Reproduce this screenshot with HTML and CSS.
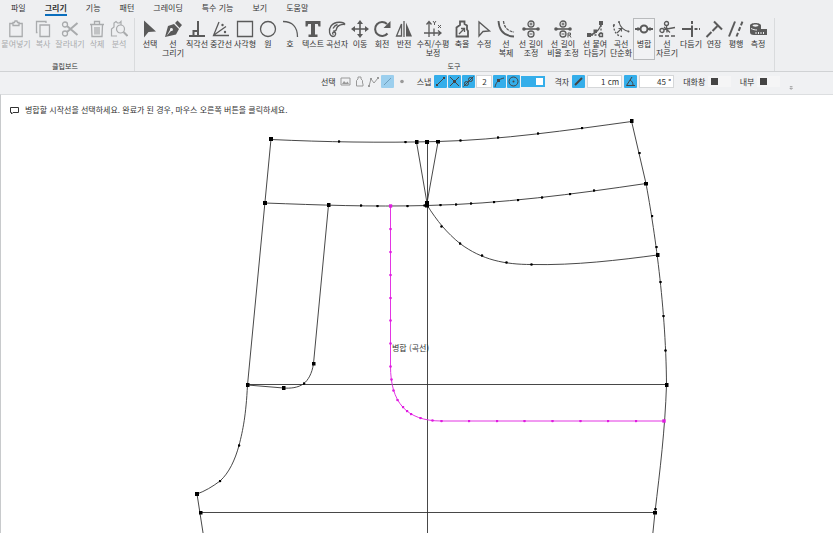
FILE: index.html
```html
<!DOCTYPE html>
<html lang="ko">
<head>
    <meta charset="UTF-8">
    <meta name="viewport" content="width=device-width, initial-scale=1.0">
    <title>패턴 그리기</title>
    <link rel="stylesheet" href="styles.css">
</head>
<body>
    <nav class="menu">
        <a href="#">파일</a>
        <a href="#" class="active">그리기</a>
        <a href="#">기능</a>
        <a href="#">패턴</a>
        <a href="#">그레이딩</a>
        <a href="#">특수 기능</a>
        <a href="#">보기</a>
        <a href="#">도움말</a>
    </nav>

    <div class="ribbon">
        <section class="group clipboard">
            <div class="tools">
                <button class="tool w4" disabled>
                    <svg viewBox="0 0 18 18"><path d="M6 3.500H2.800v13h12.400v-13H12"/><path d="M6 5.500v-3h1.500l.5-1.500h2l.5 1.500H12v3z"/></svg>
                    붙여넣기
                </button>
                <button class="tool" disabled>
                    <svg viewBox="0 0 18 18"><path d="M6 5h9.500v11.500H6z"/><path d="M3.500 12.500H2.500v-11H12V3"/></svg>
                    복사
                </button>
                <button class="tool w4" disabled>
                    <svg viewBox="0 0 18 18"><circle cx="4" cy="4.500" r="2.500"/><circle cx="4" cy="13.500" r="2.500"/><path d="M6 6l10.500 9M6 12L16.500 3" stroke-width="2"/></svg>
                    잘라내기
                </button>
                <button class="tool" disabled>
                    <svg viewBox="0 0 18 18"><path d="M2 4.500h14M6.500 4V1.500h5V4M3.500 5l.5 11.500h10L14.500 5M7 7v7.500M9 7v7.500M11 7v7.500"/></svg>
                    삭제
                </button>
                <button class="tool" disabled>
                    <svg viewBox="0 0 18 18"><path d="M7 16H1.500V9L4 7V3l2-1.500 1.500 1.500h2L11 1.500V5" stroke-width="1.200"/><circle cx="10.500" cy="9" r="4" stroke-width="1.200"/><path d="M13.500 12l4 4" stroke-width="2"/></svg>
                    분석
                </button>
            </div>
            <h2>클립보드</h2>
        </section>

        <section class="group drawing">
            <div class="tools">
                <button class="tool">
                    <svg viewBox="0 0 18 18"><path class="fill" d="M3 .5v17l4.500-5.500L15 11.500z"/></svg>
                    선택
                </button>
                <button class="tool w3">
                    <svg viewBox="0 0 18 18"><path class="fill" fill-rule="evenodd" d="M1 17L4 6l6-2 5 5-3 5.500zM2.500 16l4.500-5a1.500 1.500 0 1 0-1-1zM11 3l2.500-2.500L18 5l-2.500 3z"/></svg>
                    선<br>그리기
                </button>
                <button class="tool w3">
                    <svg viewBox="0 0 18 18"><path d="M1 16h16M10 1v15M5.500 16v-5H10" stroke-width="2"/></svg>
                    직각선
                </button>
                <button class="tool w3">
                    <svg viewBox="0 0 18 18"><path d="M7 2L1.500 15.500H17M2 15l12-8.500"/><circle class="fill" cx="10.500" cy="5" r="1.200"/><circle class="fill" cx="13" cy="12" r="1.200"/></svg>
                    중간선
                </button>
                <button class="tool w3">
                    <svg viewBox="0 0 18 18"><path d="M1.500 1.500h15v15h-15z"/></svg>
                    사각형
                </button>
                <button class="tool">
                    <svg viewBox="0 0 18 18"><circle cx="9" cy="9" r="7.500"/></svg>
                    원
                </button>
                <button class="tool">
                    <svg viewBox="0 0 18 18"><path d="M2 1.500C11 1.500 16.500 7 16.500 17"/></svg>
                    호
                </button>
                <button class="tool w3">
                    <svg viewBox="0 0 18 18"><path class="fill" d="M1.500 1h15v5.500h-2l-.7-2.500H11v10.500h2.500v2.500h-9v-2.500H7V4H4.200l-.7 2.500h-2z"/></svg>
                    텍스트
                </button>
                <button class="tool w3">
                    <svg viewBox="0 0 18 18"><path d="M17 4.500C16 1.500 7 1 3 6c-3 4-1.500 10 2 10.500 3 0 3.500-4 1-4.500-1.500 0-2 2-.5 2.500M17 4.500C14 4 9 5 8.500 9c-.5 2-2 2.500-3 1.500M5 8.500c1-2 2.500-3.500 4.500-4"/></svg>
                    곡선자
                </button>
                <button class="tool">
                    <svg viewBox="0 0 18 18"><path d="M9 2v14M2 9h14" stroke-width="1.600"/><path class="fill" d="M9 0l3 4H6zM9 18l3-4H6zM0 9l4-3v6zM18 9l-4-3v6z"/></svg>
                    이동
                </button>
                <button class="tool">
                    <svg viewBox="0 0 18 18"><path d="M14.500 13.500A7 7 0 1 1 14 4" stroke-width="2"/><path class="fill" d="M17.500 1v7h-7z"/></svg>
                    회전
                </button>
                <button class="tool">
                    <svg viewBox="0 0 18 18"><path d="M9 1v16M6.500 4v12H1.500z"/><path class="fill" d="M11 2.500l6 14h-6z"/></svg>
                    반전
                </button>
                <button class="tool w5">
                    <svg viewBox="0 0 18 18"><path d="M5 17V2M2.500 4.500L5 1.500l2.500 3M0 13h16M14 10.500l3 2.500-3 2.500M10 8.500V16"/><path d="M9 1l1.500 2L12 1M10.500 3v2M14 5l3 3M17 5l-3 3" stroke-width="1"/></svg>
                    수직/수평<br>보정
                </button>
                <button class="tool">
                    <svg viewBox="0 0 18 18"><path d="M3.500 16.500V7.500L7 5V1.500h4.500V4L14 5.500v4l1 1.500v5.500z" stroke-width="1.800"/><path d="M6 14l5-5M8 8.500h3.500V12"/></svg>
                    축율
                </button>
                <button class="tool">
                    <svg viewBox="0 0 18 18"><path d="M4 2v14l4-4.500 6.500-.5z"/></svg>
                    수정
                </button>
                <button class="tool">
                    <svg viewBox="0 0 18 18"><path d="M1.500 1C2 10 7 16 17 16.500" stroke-width="1.800"/><path d="M6.500 1C7 7 11 11.500 17 12" stroke-dasharray="3 1"/></svg>
                    선<br>복제
                </button>
                <button class="tool w3s">
                    <svg viewBox="0 0 18 18"><path d="M1 9h16" stroke-width="1.600"/><circle cx="9" cy="4" r="3"/><circle cx="9" cy="14" r="3"/><path d="M7.500 4h3M9 2.500v3M7.500 14h3" stroke-width="1"/><circle class="fill" cx="2" cy="9" r="1.800"/><circle class="fill" cx="16" cy="9" r="1.800"/></svg>
                    선 길이<br>조정
                </button>
                <button class="tool w5">
                    <svg viewBox="0 0 18 18"><path d="M1 9h16" stroke-width="1.600"/><circle cx="9" cy="4" r="3"/><circle cx="9" cy="14" r="3"/><path d="M7.500 4h3M9 2.500v3M7.500 14h3" stroke-width="1"/><circle class="fill" cx="2" cy="9" r="1.800"/><circle class="fill" cx="16" cy="9" r="1.800"/><path d="M14 17.500V13h2.500v2H14M15.500 15l1.500 2.500" stroke-width="1"/></svg>
                    선 길이<br>비율 조정
                </button>
                <button class="tool w3s">
                    <svg viewBox="0 0 18 18"><path d="M3 15c5 0 12-6 12-12"/><path d="M15 5v10M5 15h9" stroke-dasharray="2 1.500"/><path class="fill" d="M1 13h4v4H1zM13 1h4v4h-4zM7.500 9.500h3.500V13H7.500z"/><path d="M13.500 13.500h3v3h-3z"/></svg>
                    선 붙여<br>다듬기
                </button>
                <button class="tool w3">
                    <svg viewBox="0 0 18 18"><path d="M1.500 5C2 12 5 16 10 16.500" stroke-dasharray="2 1.500"/><path d="M7 2c1 5 5 9 10 9.500M5 13l4.500-4.500M6.500 8.500h3v3" stroke-width="1.100"/><circle class="fill" cx="7" cy="2" r="1"/><circle class="fill" cx="16.500" cy="11.500" r="1"/><circle class="fill" cx="2" cy="5" r="1"/></svg>
                    곡선<br>단순화
                </button>
                <button class="tool selected">
                    <svg viewBox="0 0 18 18"><path d="M0 9h5M13 9h5" stroke-width="2"/><circle cx="9" cy="9" r="3.500" stroke-width="2"/><path class="fill" d="M2 7.500h2v3H2zM14 7.500h2v3h-2z"/></svg>
                    병합
                </button>
                <button class="tool w3">
                    <svg viewBox="0 0 18 18"><circle cx="8.500" cy="3.500" r="2"/><circle cx="4" cy="10.500" r="2"/><path d="M8.500 5.500l.5 7M6 9.500l11-2M6 7l6 5.500"/><path d="M1 16h16" stroke-dasharray="4 2"/></svg>
                    선<br>자르기
                </button>
                <button class="tool w3">
                    <svg viewBox="0 0 18 18"><path d="M0 9h11M10 9v8" stroke-width="2"/><path d="M10 1v7M12.500 9H18" stroke-dasharray="3 1.500" stroke-width="2"/></svg>
                    다듬기
                </button>
                <button class="tool">
                    <svg viewBox="0 0 18 18"><path d="M9 1.500l8 8" stroke-width="2"/><path d="M1.500 17l5-5M7.500 11L13 5.500" stroke-dasharray="7 1.500 3 1.500" stroke-width="2"/></svg>
                    연장
                </button>
                <button class="tool">
                    <svg viewBox="0 0 18 18"><path d="M2 16.500l6-15" stroke-width="2"/><path d="M9.500 16.500l6-15" stroke-dasharray="4 2" stroke-width="2"/></svg>
                    평행
                </button>
                <button class="tool">
                    <svg viewBox="0 0 18 18"><path class="fill" fill-rule="evenodd" d="M1 5.500c0-3.500 11-3.500 11 0v3.500h6v6H5c-3 0-4-1-4-3zM3.500 5.500c0 1.500 6 1.500 6 0s-6-1.500-6 0z"/><path class="ticks" d="M2 8.500c2 1 4 1.500 6 1.500M7 14v-2M9.500 14v-2M12 14v-2M14.500 14v-2"/></svg>
                    측정
                </button>
            </div>
            <h2>도구</h2>
        </section>
    </div>

    <div class="options">
        <span class="caption">선택</span>
        <div class="set">
            <button class="mini off" aria-label="이미지"><svg viewBox="0 0 13 13"><path d="M2 3h9v7H2z"/><path class="fill" d="M3 9l2-3 2 2 1.500-1.500L10 9z"/></svg></button>
            <button class="mini off" aria-label="패턴 조각"><svg viewBox="0 0 13 13"><path d="M3.500 11V5.500L5 4V2h3v2l1.500 1.500V8l.5 1v2z"/></svg></button>
            <button class="mini off" aria-label="꺾은선"><svg viewBox="0 0 13 13"><path d="M2 11l2-7 3 4 4-5"/><path class="fill" d="M1 10h2v2H1zM3 3h2v2H3zM10 2h2v2h-2z"/></svg></button>
            <button class="mini on faded" aria-label="선"><svg viewBox="0 0 13 13"><path d="M3 10l7-7"/></svg></button>
            <button class="mini off" aria-label="점"><svg viewBox="0 0 13 13"><circle class="fill" cx="7" cy="6.500" r="1.800"/></svg></button>
        </div>

        <label class="caption" for="snap-count">스냅</label>
        <div class="set">
            <button class="mini on" aria-label="끝점"><svg viewBox="0 0 13 13"><path d="M3 10l7-7"/><path class="fill" d="M2 9h2v2H2zM9 2h2v2H9z"/></svg></button>
            <button class="mini on" aria-label="교차점"><svg viewBox="0 0 13 13"><path d="M2 2l9 9M11 2l-9 9"/><path class="fill" d="M5 5h3v3H5z"/></svg></button>
            <button class="mini on" aria-label="분할점"><svg viewBox="0 0 13 13"><path d="M1.500 11.500l10-10"/><circle cx="4.500" cy="8.500" r="2"/><circle cx="8.500" cy="4.500" r="2"/></svg></button>
            <input class="field count" id="snap-count" type="text" value="2">
            <button class="mini on" aria-label="곡선"><svg viewBox="0 0 13 13"><path d="M2 12C3 7 6 4 11 3"/><path class="fill" d="M4 4h3v3H4z"/></svg></button>
            <button class="mini on" aria-label="중심점"><svg viewBox="0 0 13 13"><circle cx="6.500" cy="6.500" r="4.500"/><circle class="fill" cx="6.500" cy="6.500" r="1"/></svg></button>
            <input class="switch" type="checkbox" aria-label="스냅 사용" checked>
        </div>

        <label class="caption" for="grid-size">격자</label>
        <div class="set wide">
            <button class="mini on" aria-label="격자 간격"><svg viewBox="0 0 13 13"><path d="M3 10l7-7" stroke-width="2"/></svg></button>
            <input class="field" id="grid-size" type="text" value="1 cm">
            <button class="mini on" aria-label="격자 각도"><svg viewBox="0 0 13 13"><path d="M8 2L2.500 10.500H11M6 5c2 1 3 3 3 5"/></svg></button>
            <input class="field" type="text" value="45 °" aria-label="각도">
        </div>

        <span class="caption">대화창</span>
        <button class="swatch" aria-label="대화창 색상"></button>
        <span class="caption">내부</span>
        <button class="swatch" aria-label="내부 색상"></button>
        <button class="overflow" aria-label="더 보기"><svg viewBox="0 0 5 5"><path d="M1 .5h3M1 2.500h3L2.500 4z"/></svg></button>
    </div>

    <main class="canvas">
        <svg class="pattern" viewBox="1 95 832 438" preserveAspectRatio="xMinYMin slice">
            <defs>
                <marker id="node" markerUnits="userSpaceOnUse" markerWidth="4" markerHeight="4" refX="2" refY="2"><rect width="4" height="4"/></marker>
                <marker id="point" markerUnits="userSpaceOnUse" markerWidth="3" markerHeight="3" refX="1.300" refY="1.300"><circle cx="1.300" cy="1.300" r="1.300"/></marker>
                <marker id="node-hot" markerUnits="userSpaceOnUse" markerWidth="4" markerHeight="4" refX="1.700" refY="1.700"><rect class="hot" width="3.400" height="3.400"/></marker>
                <marker id="point-hot" markerUnits="userSpaceOnUse" markerWidth="3" markerHeight="3" refX="1.300" refY="1.300"><circle class="hot" cx="1.300" cy="1.300" r="1.300"/></marker>
            </defs>

            <!-- guide lines -->
            <path class="line" d="M247.500 384.500H666.500M200.500 512.500H655M427.500 142V700"/>

            <!-- waistband and dart -->
            <path class="line" d="M271 139.500C325 142 380 143 438 141.500C500 140 570 130 631.500 121.500"/>
            <path class="line" d="M265 203C320 205 370 207 427 205.500C500 204 575 194 646 183.500"/>
            <path class="line" d="M416.500 142L427 203L438 142"/>

            <!-- side seams -->
            <path class="line" d="M631.500 121L646 183.500C652 216 666 300 666.500 385C665 430 660 470 655 512L636 700"/>
            <path class="line" d="M271 139L247.500 385C246 415 243 430 239 445.500C235 460 229 473 220 481C212 487 205 491 197 494L229 700"/>

            <!-- pocket and fly -->
            <path class="line" d="M427 205C437 221 447 233 460 243.500C482 260 505 264.500 531.500 264.500C575 265.500 620 260 657.500 255"/>
            <path class="line" d="M328.500 205L313.500 363.500C312 374 308 380 304 383.500C298 388 290 388.500 283.500 388L247.500 385"/>

            <polyline class="nodes" points="271,139 416.500,142 427,142 438,141.500 631.500,121 265,203 328.500,205 427,203 427,205.500 646,183.500 657.500,255 666.500,385 655,512.500 200.500,512.500 197,494 247.500,385 283.500,388 313.500,363.500"/>
            <polyline class="points" points="339,141.500 405.500,142 460.500,140.500 498,137.500 538,133.500 582,128 361,205.500 377.500,206 407.500,206 424.500,205.500 440.500,205 456,204.500 471,203.500 494,202 518,200 542,197.500 570,194 594,190.500 441.500,226.500 460,243.500 482,255.500 506.500,262.500 531.500,264.500 639.500,153 652,216 656.500,247 660.500,282 663.500,316 665.500,350.500 655.500,509 304,383.500 239,445.500 220,481"/>

            <!-- lines being merged -->
            <path class="line merge" d="M390.500 206V366C390.500 402 406 421 441.500 421H664"/>
            <polyline class="points merge" points="390.500,229 390.500,252 390.500,275 390.500,298 390.500,320.500 390.500,343.500 390.500,366.500 391.500,379.500 393.500,390.500 397.500,400 403,407 407,411 411,414 420.500,418 432.500,420.500 441.500,421 469,421 497,421 524.500,421 552.500,421 580.500,421 608,421 636,421"/>
            <polyline class="nodes merge" points="390.500,206 664,421"/>
            <text class="hint" x="392" y="351">병합 (곡선)</text>
        </svg>
        <p class="message">
            <svg viewBox="0 0 9 9"><path d="M.5 1.500h8v5H3L1.500 8V6.500h-1z"/></svg>
            병합할 시작선을 선택하세요. 완료가 된 경우, 마우스 오른쪽 버튼을 클릭하세요.
        </p>
    </main>
</body>
</html>
```
FILE: styles.css
```css
* {
    margin: 0;
    padding: 0;
    box-sizing: border-box;
}

body {
    font-family: "Noto Sans CJK KR", sans-serif;
    font-size: 8px;
    color: #333;
    background: #eeeff1;
    height: 100vh;
    display: flex;
    flex-direction: column;
    overflow: hidden;
}

button,
input {
    font: inherit;
    color: inherit;
    border: none;
    background: none;
}

svg {
    display: block;
    fill: none;
    stroke: currentColor;
}

.fill {
    fill: currentColor;
    stroke: none;
}

.menu {
    display: flex;
    gap: 19px;
    padding: 0 11px;
    height: 18px;
}

.menu a {
    height: 16px;
    line-height: 16px;
    color: #333;
    text-decoration: none;
    white-space: nowrap;
}

.menu .active {
    font-weight: bold;
    border-bottom: 2px solid #0a6ebd;
}

.ribbon {
    display: flex;
    height: 54px;
    border-bottom: 1px solid #d0d2d4;
}

.group {
    display: flex;
    flex-direction: column;
    justify-content: space-between;
    border-right: 1px solid #d9dbdd;
}

.clipboard {
    padding-right: 4px;
}

.drawing {
    padding: 0 5px 0 4px;
}

.group h2 {
    font-size: 7px;
    font-weight: normal;
    line-height: 10px;
    text-align: center;
}

.tools {
    display: flex;
}

.tool {
    display: flex;
    flex-direction: column;
    align-items: center;
    flex: none;
    width: 22px;
    height: 42px;
    border: 1px solid transparent;
    line-height: 9px;
    text-align: center;
    white-space: nowrap;
    color: #333;
}

.tool svg {
    width: 18px;
    height: 18px;
    margin: 1px 0;
    flex: none;
    color: #5a5a5a;
    stroke-width: 1.3;
}

.tool:disabled,
.tool:disabled svg {
    color: #a9abad;
}

.tool.selected {
    border-color: #b9bbbd;
    background: #f1f2f4;
}

.tool .ticks {
    stroke: #eeeff1;
    stroke-width: 1;
}

.w3 {
    width: 24px;
}

.w3s {
    width: 28px;
}

.w4 {
    width: 32px;
}

.w5 {
    width: 36px;
}

.options {
    display: flex;
    align-items: center;
    height: 22px;
    padding: 0 40px 3px 321px;
    background: #f0f1f3;
}

.caption {
    white-space: nowrap;
}

.set {
    display: flex;
    align-items: center;
    gap: 1px;
    margin: 0 9px 0 3px;
}

.set.wide {
    gap: 2px;
}

.mini {
    width: 13px;
    height: 13px;
    border-radius: 1px;
}

.mini.off {
    color: #999;
}

.mini.on {
    background: #35aeea;
    color: #444;
}

.mini.faded {
    background: #9ccfee;
    color: #6f9fbd;
}

.field {
    width: 35px;
    height: 13px;
    padding: 0 2px;
    border: 1px solid #d5d7d9;
    background: #fff;
    text-align: right;
}

.field.count {
    width: 16px;
    text-align: center;
}

.switch {
    appearance: none;
    width: 24px;
    height: 11px;
    padding: 2px;
    background: #35aeea;
    display: flex;
    justify-content: flex-end;
}

.switch::before {
    content: "";
    width: 7px;
    height: 7px;
    background: #fff;
}

.switch:not(:checked) {
    background: #b5b7b9;
    justify-content: flex-start;
}

.swatch {
    width: 25px;
    height: 11px;
    margin: 0 9px 0 3px;
    padding: 2px 3px;
    background: #f5f5f6;
}

.swatch::before {
    content: "";
    display: block;
    width: 7px;
    height: 7px;
    background: #444;
}

.overflow {
    width: 5px;
    height: 5px;
    align-self: flex-end;
    color: #666;
}

.overflow svg {
    stroke-width: 0.6;
}

.canvas {
    position: relative;
    flex: 1;
    border-top: 1px solid #dcdee0;
    border-left: 1px solid #c8cacc;
    background: #fff;
}

.pattern {
    position: absolute;
    inset: 0;
    width: 100%;
    height: 100%;
}

.line {
    stroke: #333;
    stroke-width: 0.9;
}

.line.merge {
    stroke: #e335e3;
    stroke-width: 1;
}

marker {
    fill: #000;
    stroke: none;
}

.hot {
    fill: #e01be0;
}

.nodes,
.points {
    stroke: none;
}

.nodes {
    marker: url(#node);
}

.points {
    marker: url(#point);
}

.nodes.merge {
    marker: url(#node-hot);
}

.points.merge {
    marker: url(#point-hot);
}

.hint {
    font-size: 8px;
    fill: #333;
    stroke: none;
}

.message {
    position: relative;
    display: flex;
    align-items: center;
    gap: 6px;
    padding: 9px;
    line-height: 12px;
}

.message svg {
    width: 9px;
    height: 9px;
}
```
